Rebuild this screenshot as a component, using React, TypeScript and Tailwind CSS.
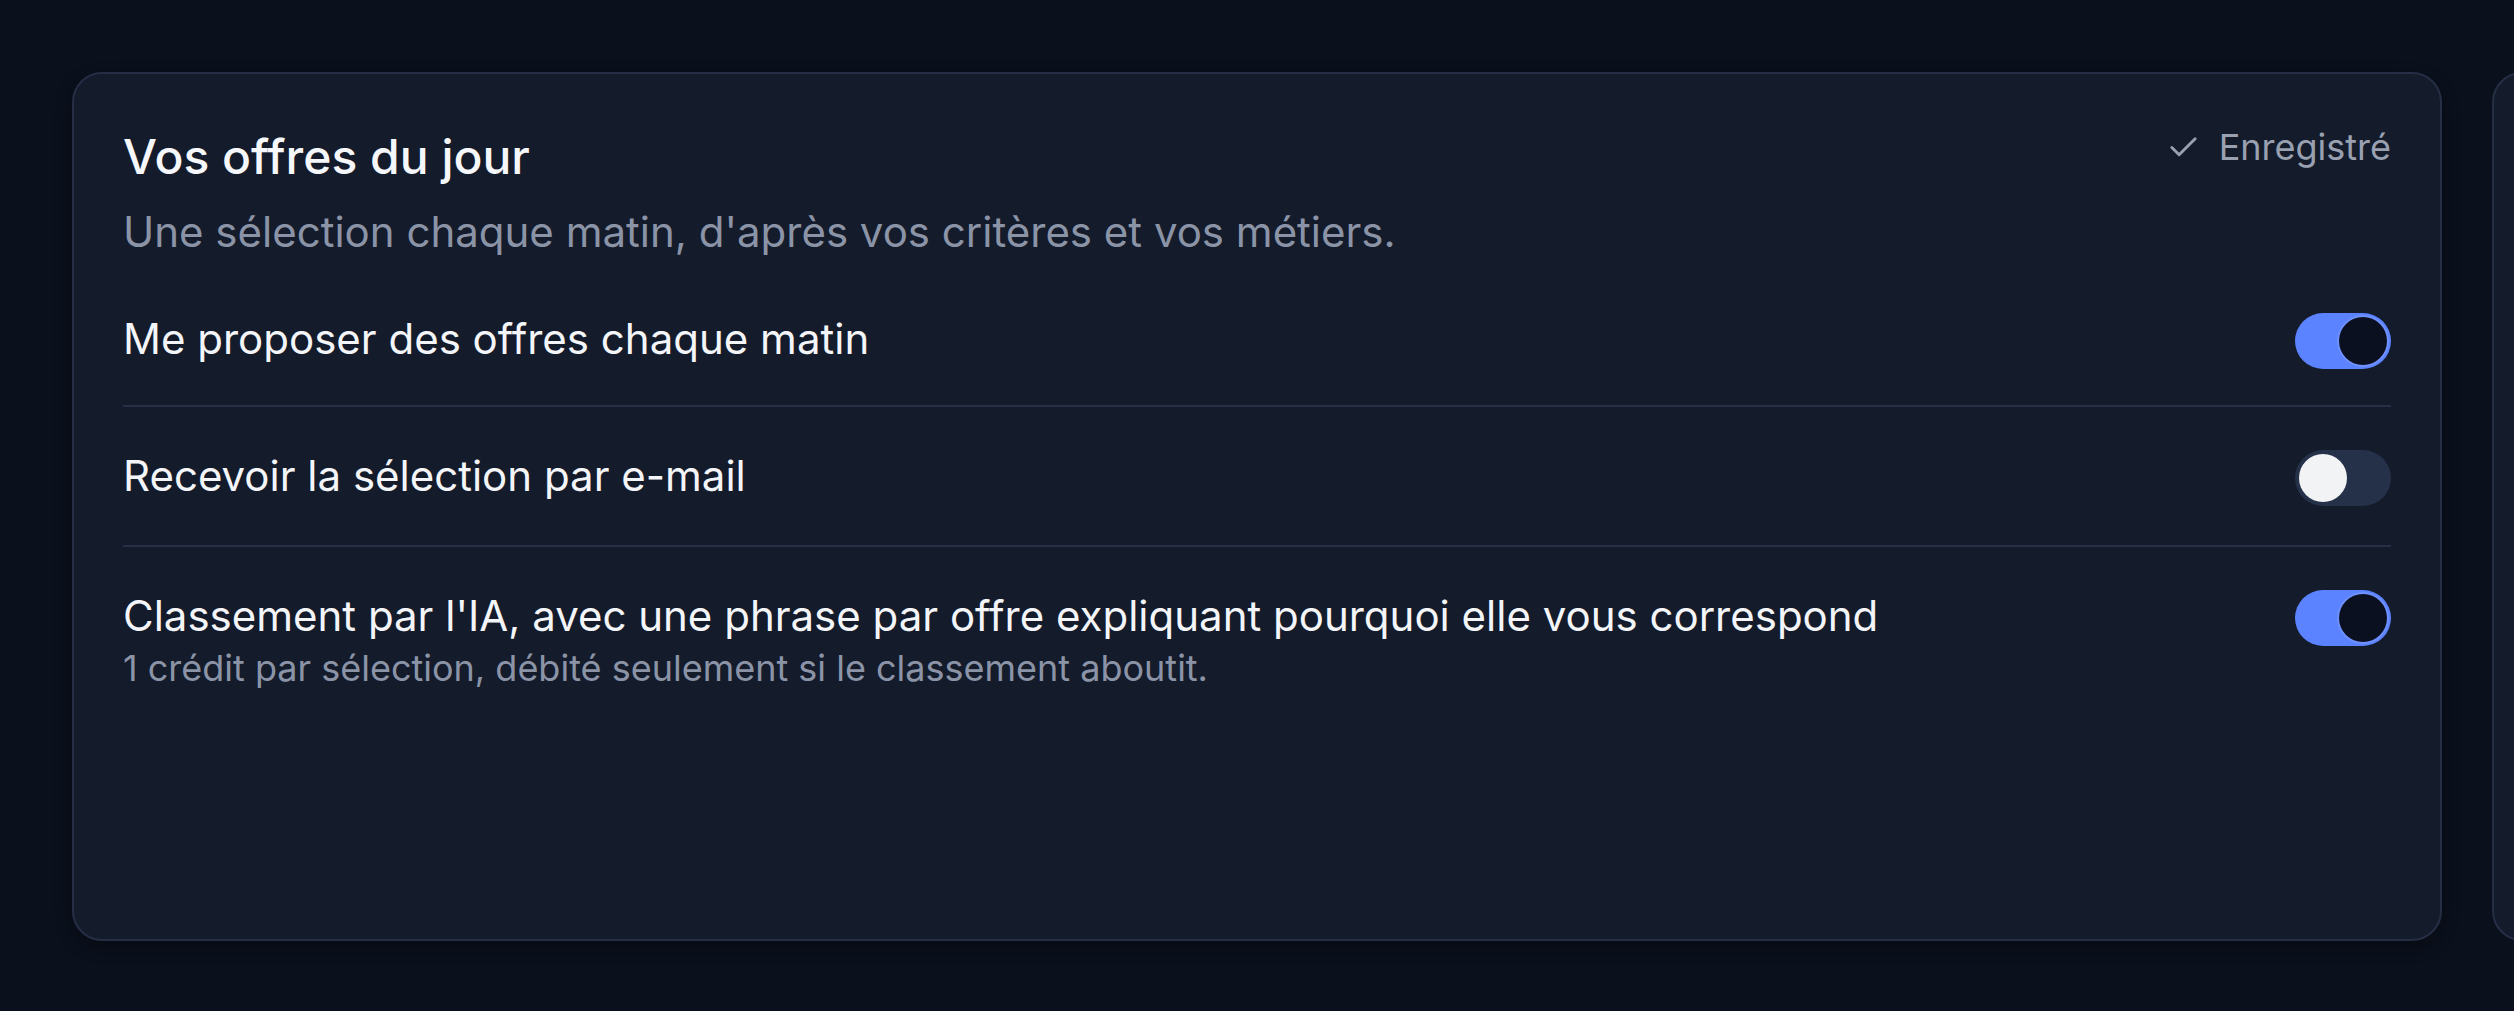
import { useState } from "react";
import { Check } from "lucide-react";

type Pref = {
  id: string;
  label: string;
  hint?: string;
  on: boolean;
};

const initialPrefs: Pref[] = [
  { id: "daily", label: "Me proposer des offres chaque matin", on: true },
  { id: "email", label: "Recevoir la sélection par e-mail", on: false },
  {
    id: "ai",
    label:
      "Classement par l'IA, avec une phrase par offre expliquant pourquoi elle vous correspond",
    hint: "1 crédit par sélection, débité seulement si le classement aboutit.",
    on: true,
  },
];

function Toggle({ on, onClick }: { on: boolean; onClick: () => void }) {
  return (
    <button
      onClick={onClick}
      className={`flex h-[56px] w-[96px] shrink-0 items-center rounded-full p-[4px] ${
        on ? "bg-[#5b82ff]" : "bg-[#253049]"
      }`}
    >
      <span
        className={`block h-[48px] w-[48px] rounded-full transition-transform ${
          on
            ? "translate-x-[40px] bg-[#0a1020] ring-2 ring-[#6f90ff]"
            : "bg-[#f2f3f5]"
        }`}
      />
    </button>
  );
}

export default function App() {
  const [prefs, setPrefs] = useState<Pref[]>(initialPrefs);

  const toggle = (id: string) => {
    setPrefs((p) => p.map((x) => (x.id === id ? { ...x, on: !x.on } : x)));
  };

  return (
    <div
      className="h-screen w-full overflow-hidden bg-[#0a101c] pl-[72px] pt-[72px]"
      style={{ fontFamily: "Inter, 'Noto Sans', sans-serif" }}
    >
      <div className="flex gap-[50px]">
        <section className="h-[869px] w-[2370px] shrink-0 rounded-[30px] border-2 border-[#252e45] bg-[#141b2b] px-[49px] pt-[48px] shadow-[0_6px_16px_rgba(0,0,0,0.35)]">
          <div className="flex items-start justify-between">
            <h2 className="text-[48px] font-medium leading-[70px] text-[#f5f7fa]">
              Vos offres du jour
            </h2>
            <div className="flex items-center gap-[18px] text-[36px] leading-[50px] text-[#99a1b1]">
              <Check size={35} strokeWidth={2} />
              <span>Enregistré</span>
            </div>
          </div>
          <p className="mt-[10px] text-[42px] leading-[60px] text-[#8b94a7]">
            Une sélection chaque matin, d'après vos critères et vos métiers.
          </p>

          <div className="mt-[9px]">
            {prefs.map((p, i) => (
              <div
                key={p.id}
                className={`flex items-start justify-between gap-[40px] ${
                  i > 0
                    ? "border-t-2 border-[#262f46] pb-[39px] pt-[39px]"
                    : "pb-[36px] pt-[38px]"
                }`}
              >
                <div>
                  <div className="text-[42px] leading-[60px] text-[#f3f5f8]">
                    {p.label}
                  </div>
                  {p.hint && (
                    <div className="text-[36px] leading-[45px] text-[#8b94a7]">
                      {p.hint}
                    </div>
                  )}
                </div>
                <div className="mt-[4px]">
                  <Toggle on={p.on} onClick={() => toggle(p.id)} />
                </div>
              </div>
            ))}
          </div>
        </section>

        <section className="h-[869px] w-[2370px] shrink-0 rounded-[30px] border-2 border-[#252e45] bg-[#141b2b]" />
      </div>
    </div>
  );
}
